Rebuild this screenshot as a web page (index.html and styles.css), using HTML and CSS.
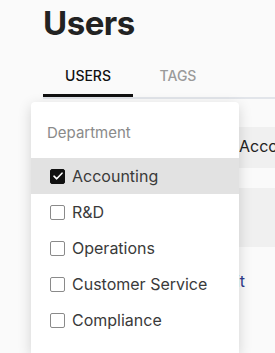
FILE: index.html
```html
<!DOCTYPE html>
<html lang="en">
<head>
    <meta charset="UTF-8">
    <meta name="viewport" content="width=device-width, initial-scale=1.0">
    <title>Users</title>
    <link rel="stylesheet" href="styles.css">
</head>
<body>
    <div class="page">
        <h1 class="title">Users</h1>

        <div class="tabs">
            <div class="tab active">USERS</div>
            <div class="tab">TAGS</div>
        </div>

        <div class="table">
            <div class="row head"></div>
            <div class="row shaded tall"><span class="cell">Acco</span></div>
            <div class="row thin"></div>
            <div class="row shaded big"></div>
            <div class="row link-row"><span class="cell link">Edit</span></div>
        </div>
    </div>

    <div class="dropdown">
        <div class="dropdown-label">Department</div>
        <label class="option selected">
            <span class="box checked">
                <svg width="10" height="8" viewBox="0 0 10 8"><path d="M1 4.2 L3.7 6.8 L9 1.2" fill="none" stroke="#fff" stroke-width="1.6" stroke-linecap="round" stroke-linejoin="round"/></svg>
            </span>
            Accounting
        </label>
        <label class="option"><span class="box"></span>R&amp;D</label>
        <label class="option"><span class="box"></span>Operations</label>
        <label class="option"><span class="box"></span>Customer Service</label>
        <label class="option"><span class="box"></span>Compliance</label>
    </div>
</body>
</html>
```

FILE: styles.css
```css
body {
    margin: 0;
    background-color: #fafafa;
    font-family: Inter, "Liberation Sans", sans-serif;
    overflow: hidden;
}
.page {
    padding-left: 43px;
}
.title {
    margin: 3px 0 0;
    font-size: 33px;
    line-height: 40px;
    font-weight: 700;
    color: #222;
    letter-spacing: -0.5px;
}
.tabs {
    display: flex;
    margin-top: 11px;
    border-bottom: 2px solid #e2e5ea;
}
.tab {
    width: 90px;
    text-align: center;
    padding: 12px 0 8px;
    line-height: 20px;
    font-size: 14px;
    font-weight: 500;
    color: #9a9a9a;
    border-bottom: 3px solid transparent;
}
.tab.active {
    color: #111;
    border-bottom-color: #111;
}
.table {
    height: 254px;
    overflow: hidden;
}
.row {
    height: 28px;
    display: flex;
    align-items: center;
}
.row.shaded {
    background-color: #f0f0f0;
}
.row.tall {
    height: 41px;
}
.row.thin {
    height: 20px;
}
.row.big {
    height: 59px;
}
.row.link-row {
    height: 72px;
}
.cell {
    padding-left: 196px;
    font-size: 16px;
    color: #222;
    white-space: nowrap;
    margin-top: -4px;
}
.cell.link {
    padding-left: 0;
    width: 202px;
    text-align: right;
    color: #2d3a8c;
}
.dropdown {
    position: absolute;
    left: 31px;
    top: 102px;
    width: 208px;
    height: 251px;
    background: white;
    border-radius: 4px 4px 0 0;
    box-shadow: 0 4px 14px rgba(0,0,0,0.16);
}
.dropdown-label {
    padding: 21px 0 15px 16px;
    line-height: 20px;
    font-size: 15px;
    color: #8a8a8a;
}
.option {
    display: flex;
    align-items: center;
    gap: 7px;
    height: 36px;
    padding-left: 19px;
    font-size: 16px;
    color: #3a3a3a;
}
.option.selected {
    background-color: #e2e2e2;
}
.box {
    width: 15px;
    height: 15px;
    box-sizing: border-box;
    border: 1.5px solid #8a8a8a;
    border-radius: 2px;
    background: white;
    display: flex;
    align-items: center;
    justify-content: center;
}
.box.checked {
    background: #111;
    border-color: #111;
}
```
